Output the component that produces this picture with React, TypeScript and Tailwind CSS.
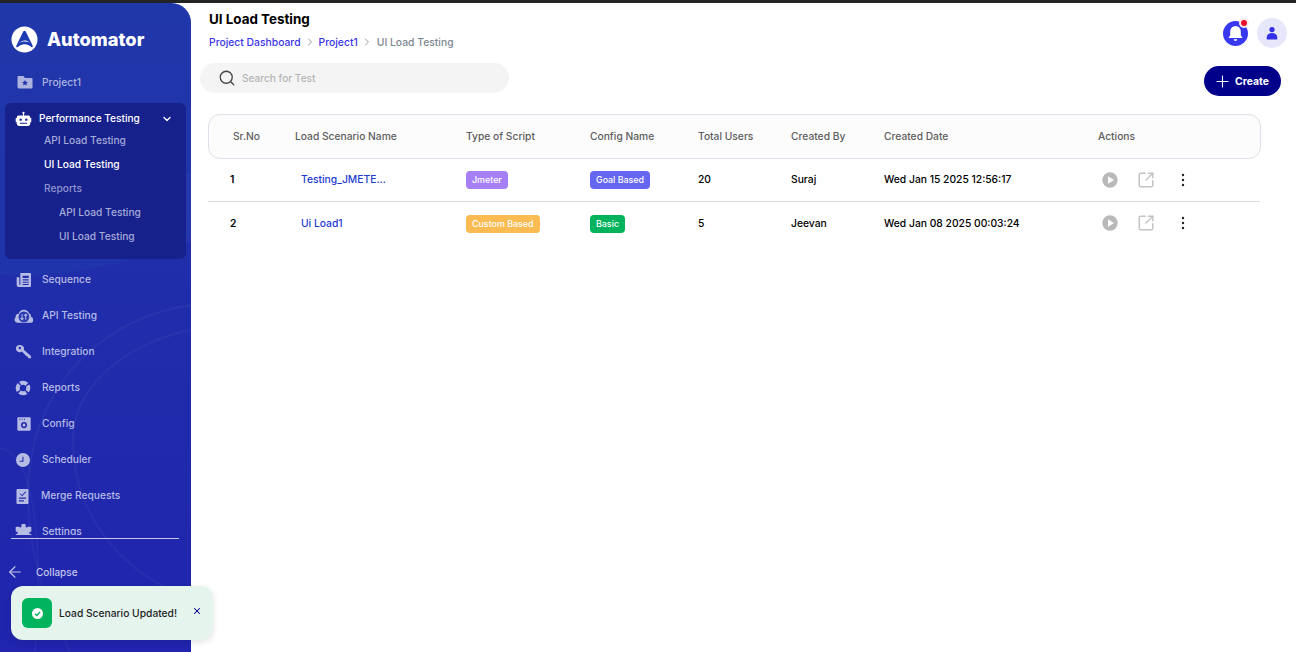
import React from "react";
import { ChevronDown, ChevronRight, Search, Plus, X, ArrowLeft, SquareArrowOutUpRight } from "lucide-react";

const Ic = ({ children, cls = "w-[16px] h-[16px]" }: { children: React.ReactNode; cls?: string }) => (
  <svg viewBox="0 0 24 24" className={cls} fill="currentColor">{children}</svg>
);

const FolderStar = () => (
  <Ic cls="w-[18px] h-[18px]"><path fillRule="evenodd" d="M3 4h7l2 2.500h8.500A1.500 1.500 0 0 1 22 8v11a1.500 1.500 0 0 1-1.500 1.500h-17A1.500 1.500 0 0 1 2 19V5a1 1 0 0 1 1-1Zm9 5.200 1.200 2.600 2.800.3-2.100 1.900.6 2.800-2.500-1.400-2.500 1.400.6-2.800L8 12.100l2.800-.3Z" /></Ic>
);
const Robot = () => (
  <Ic cls="w-[17px] h-[17px]"><path fillRule="evenodd" d="M12 1a1.600 1.600 0 0 1 .8 3v2.500H19a2.500 2.500 0 0 1 2.500 2.500v1H23v6h-1.500v2a3 3 0 0 1-3 3h-13a3 3 0 0 1-3-3v-2H1v-6h1.500V9A2.500 2.500 0 0 1 5 6.500h6.200V4A1.600 1.600 0 0 1 12 1ZM8 10.500a1.700 1.700 0 1 0 0 3.400 1.700 1.700 0 0 0 0-3.400Zm8 0a1.700 1.700 0 1 0 0 3.400 1.700 1.700 0 0 0 0-3.400ZM7 16.500V18h10v-1.500Z" /></Ic>
);
const Sequence = () => (
  <Ic><path fillRule="evenodd" d="M7 1.500h14A1.500 1.500 0 0 1 22.500 3v18a1.500 1.500 0 0 1-1.500 1.500H4A3 3 0 0 1 1 19.500V8h4v11h1.500V2A.5.5 0 0 1 7 1.500ZM10 5.500V9h9V5.500ZM10 11v1.800h9V11Zm0 3.500v1.800h9v-1.800Zm0 3.500v1.500h9V18Z" /></Ic>
);
const Cloud = () => (
  <svg viewBox="0 0 24 24" className="w-[19px] h-[19px]">
    <path fill="currentColor" d="M12.500 3.500a7 7 0 0 1 6.500 4.500 4 4 0 0 1 2.500 4.500 4 4 0 0 1 .5 7.500H4a4 4 0 0 1-1.800-7A3.500 3.500 0 0 1 6 8.500a7 7 0 0 1 6.500-5Z" />
    <circle cx="12.500" cy="12.500" r="6.800" fill="#2a3bb0" />
    <path d="M10.200 9v7M8.300 14l1.900 2 1.900-2M14.800 16V9M12.900 11l1.900-2 1.900 2" fill="none" stroke="currentColor" strokeWidth="1.300" />
  </svg>
);
const Wrench = () => (
  <Ic><path fillRule="evenodd" d="M6.500 1.500a5.500 5.500 0 0 1 5.200 7.300l10.800 9.200v3.500h-3.500l-1.500-1.500v-1.500h-1.800l-6.900-7.400A5.500 5.500 0 1 1 6.500 1.500ZM5.800 4.300a1.800 1.800 0 1 0 0 3.600 1.800 1.800 0 0 0 0-3.600Z" /></Ic>
);
const Donut = () => (
  <svg viewBox="0 0 24 24" className="w-[16px] h-[16px]" fill="none" stroke="currentColor" strokeWidth="6">
    <circle cx="12" cy="12" r="8" strokeDasharray="10.570 2" strokeDashoffset="5.290" />
  </svg>
);
const ConfigIc = () => (
  <Ic><path fillRule="evenodd" d="M3.500 2h17A1.500 1.500 0 0 1 22 3.500v17a1.500 1.500 0 0 1-1.500 1.500h-17A1.500 1.500 0 0 1 2 20.500v-17A1.500 1.500 0 0 1 3.500 2ZM5 4.200v1.600h1.600V4.200Zm3.500 0v1.600h1.600V4.200Zm3.500 0v1.600h1.600V4.200ZM12 8l1 1.600 1.800-.3.700 1.700 1.500 1-.8 1.600.8 1.600-1.500 1-.7 1.700-1.800-.3-1 1.400-1-1.400-1.800.3-.7-1.700-1.500-1 .8-1.600-.8-1.600 1.500-1 .7-1.700 1.800.3Zm0 3.300a2.300 2.300 0 1 0 0 4.600 2.300 2.300 0 0 0 0-4.600Z" /></Ic>
);
const Clock = () => (
  <Ic><path fillRule="evenodd" d="M12 1.500a10.500 10.500 0 1 1 0 21 10.500 10.500 0 0 1 0-21ZM12.700 7h-1.600v6.200H7v1.600h5.700Z" /></Ic>
);
const Clip = () => (
  <Ic cls="w-[17px] h-[17px]"><path fillRule="evenodd" d="M5 1.500h14A1.500 1.500 0 0 1 20.500 3v18a1.500 1.500 0 0 1-1.500 1.500H5A1.500 1.500 0 0 1 3.500 21V3A1.500 1.500 0 0 1 5 1.500Zm11 3.300-4.500 5-2.300-2.100L8 8l3.500 3.500 5.700-5.700ZM7 13.500v1.800h10v-1.800Zm0 3.700V19h7v-1.800Z" /></Ic>
);
const Gear = () => (
  <svg viewBox="0 0 24 24" className="w-[17px] h-[17px]" fill="currentColor">
    <circle cx="12" cy="12" r="8.500" />
    <rect x="9" y="0" width="6" height="6" rx="1" />
    <rect x="1" y="4" width="6" height="7" rx="1" />
    <rect x="17" y="4" width="6" height="7" rx="1" />
    <rect x="1" y="14" width="6" height="6" rx="1" />
    <rect x="17" y="14" width="6" height="6" rx="1" />
  </svg>
);
const Bell = () => (
  <svg viewBox="0 0 24 24" className="w-[17px] h-[19px]" fill="white"><path d="M12 1.500a7.500 7.500 0 0 1 7.500 7.500v5.500l2.500 4H2l2.500-4V9A7.500 7.500 0 0 1 12 1.500ZM9.500 20h5a2.500 2.500 0 0 1-5 0Z" /></svg>
);
const Logo = () => (
  <svg viewBox="0 0 28 28" className="w-[27px] h-[27px] shrink-0">
    <circle cx="14" cy="14" r="13.500" fill="white" />
    <path d="M12.700 5.800a1.500 1.500 0 0 1 2.600 0L22.500 20.500a1 1 0 0 1-1.400 1.300c-2.400-1.700-4.300-2.600-6.600-2.800-2.500-.2-5 .9-7.500 2.800a1 1 0 0 1-1.500-1.300Z" fill="#1d39b4" />
    <path d="M8 17.600c2.200-2 5-2.900 7.200-2.500 1.600.3 2.800 1 3.800 2.100-2.800-1.300-6.800-1.600-11 .4Z" fill="white" />
  </svg>
);

const navs: { label: string; icon: React.ReactNode; iconBox: string; gap: string }[] = [
  { label: "Sequence", icon: <Sequence />, iconBox: "pl-[16px]", gap: "ml-[10px]" },
  { label: "API Testing", icon: <Cloud />, iconBox: "pl-[14px]", gap: "ml-[9px]" },
  { label: "Integration", icon: <Wrench />, iconBox: "pl-[16px]", gap: "ml-[10px]" },
  { label: "Reports", icon: <Donut />, iconBox: "pl-[15px]", gap: "ml-[11px]" },
  { label: "Config", icon: <ConfigIc />, iconBox: "pl-[16px]", gap: "ml-[10px]" },
  { label: "Scheduler", icon: <Clock />, iconBox: "pl-[15px]", gap: "ml-[11px]" },
  { label: "Merge Requests", icon: <Clip />, iconBox: "pl-[14px]", gap: "ml-[10px]" },
  { label: "Settings", icon: <Gear />, iconBox: "pl-[15px]", gap: "ml-[10px]" },
];

const subs: { label: string; cls: string }[] = [
  { label: "API Load Testing", cls: "pl-[39px] text-[#a6abd9]" },
  { label: "UI Load Testing", cls: "pl-[39px] text-white" },
  { label: "Reports", cls: "pl-[39px] text-[#8f95cf]" },
  { label: "API Load Testing", cls: "pl-[54px] text-[#a6abd9]" },
  { label: "UI Load Testing", cls: "pl-[54px] text-[#a6abd9]" },
];

const Sidebar = () => (
  <aside className="relative w-[191px] h-full shrink-0 overflow-hidden rounded-tr-[20px] bg-gradient-to-b from-[#2033a8] to-[#2024ae] flex flex-col">
    <svg viewBox="0 0 191 649" className="absolute inset-0 w-full h-full pointer-events-none" fill="none" stroke="#ffffff" strokeOpacity="0.035">
      <path d="M191 170C150 178 130 200 130 240L191 240Z" fill="#ffffff" fillOpacity="0.03" stroke="none" />
      <path d="M0 272C60 277 130 262 191 232V0H0Z" fill="#2140ad" fillOpacity="0.35" stroke="none" />
      <path d="M191 327C120 342 73 387 73 437C73 517 130 577 191 594" strokeWidth="2.500" />
      <path d="M191 302C90 317 28 397 28 490C28 557 50 607 70 649" strokeWidth="2.500" />
      <path d="M0 445C30 450 45 520 35 649" strokeWidth="2" />
    </svg>
    <div className="relative flex flex-col h-full font-['Inter',sans-serif]">
      <div className="flex items-center h-[27px] mt-[23px] pl-[11px] gap-[9px]">
        <Logo />
        <span className="text-white text-[18.300px] font-extrabold leading-none">Automator</span>
      </div>
      <div className="flex items-center h-[18px] mt-[20px] pl-[16px] text-[#adb3e0]">
        <FolderStar />
        <span className="ml-[8px] text-[10.300px] font-medium relative top-[1px]">Project1</span>
      </div>
      <div className="mt-[12px] mx-[5px] h-[156px] rounded-[6px] bg-[#17218c] pt-[8px] shrink-0">
        <div className="flex items-center h-[16px] pl-[10px] pr-[13px] text-white">
          <Robot />
          <span className="ml-[7px] text-[10.100px] font-medium">Performance Testing</span>
          <ChevronDown className="w-[12px] h-[12px] ml-auto" strokeWidth={2.500} />
        </div>
        <div className="flex flex-col mt-[2px]">
          {subs.map((s, i) => (
            <div key={i} className={`h-[24px] flex items-center text-[10.200px] font-medium ${s.cls}`}>{s.label}</div>
          ))}
        </div>
      </div>
      <div className="h-[273px] mt-[3px] overflow-hidden shrink-0">
        <div className="flex flex-col">
          {navs.map((n) => (
            <div key={n.label} className={`h-[36px] shrink-0 flex items-center text-[#b6bbe6] ${n.iconBox}`}>
              {n.icon}
              <span className={`${n.gap} text-[10.200px] font-medium`}>{n.label}</span>
            </div>
          ))}
        </div>
      </div>
    </div>
    <div className="absolute left-[11px] top-[535px] w-[168px] h-px bg-[#c5c9ee]" />
    <div className="absolute left-[6px] top-[560px] flex items-center text-[#c3c7ec] font-['Inter',sans-serif]">
      <ArrowLeft className="w-[18px] h-[18px]" strokeWidth={1.500} />
      <span className="ml-[12px] text-[10px] font-medium">Collapse</span>
    </div>
  </aside>
);

const Badge = ({ text, cls }: { text: string; cls: string }) => (
  <span className={`inline-flex items-center h-[18px] px-[6px] rounded-[4px] text-[8.900px] font-medium text-white ${cls}`}>{text}</span>
);

const gridCols = "grid-cols-[87px_171px_124px_108px_93px_93px_214px_1fr]";
const headCols = "grid-cols-[86px_171px_124px_108px_93px_93px_214px_1fr]";

const rows = [
  { n: "1", name: "Testing_JMETE...", type: "Jmeter", tc: "bg-[#a67ff5]", cfg: "Goal Based", cc: "bg-[#6667f0]", users: "20", by: "Suraj", date: "Wed Jan 15 2025 12:56:17" },
  { n: "2", name: "Ui Load1", type: "Custom Based", tc: "bg-[#fabb52]", cfg: "Basic", cc: "bg-[#00b35c]", users: "5", by: "Jeevan", date: "Wed Jan 08 2025 00:03:24" },
];

const Main = () => (
  <main className="relative flex-1 min-w-0 h-full flex flex-col font-['Inter',sans-serif]">
    <div className="flex items-start justify-between pl-[18px] pr-[9px]">
      <div className="flex flex-col">
        <h1 className="mt-[8px] text-[13.400px] leading-[16px] font-bold text-black">UI Load Testing</h1>
        <div className="flex items-center mt-[8px] text-[10.350px] leading-[14px] font-medium">
          <span className="text-[#3a34e8]">Project Dashboard</span>
          <ChevronRight className="w-[12px] h-[12px] mx-[3px] text-[#9a9a9a]" />
          <span className="text-[#3a34e8]">Project1</span>
          <ChevronRight className="w-[12px] h-[12px] mx-[3.500px] text-[#9a9a9a]" />
          <span className="text-[#7d8791]">UI Load Testing</span>
        </div>
      </div>
      <div className="flex items-center gap-[9px] mt-[15px]">
        <div className="relative w-[25px] h-[25px] rounded-full bg-[#3838f0] flex items-center justify-center">
          <Bell />
          <span className="absolute right-[1px] top-[-1px] w-[6px] h-[6px] rounded-full bg-[#e8112d] ring-2 ring-[#fde8ea]" />
        </div>
        <div className="w-[30px] h-[30px] rounded-full bg-[#e6e7fb] flex items-center justify-center">
          <svg viewBox="0 0 24 24" className="w-[14px] h-[14px]" fill="#3232e6"><circle cx="12" cy="6" r="4.500" /><path d="M3 23v-4c0-4 3.500-7 9-7s9 3 9 7v4Z" /></svg>
        </div>
      </div>
    </div>

    <div className="flex items-start justify-between mt-[14px] pl-[9px] pr-[15px]">
      <div className="flex items-center w-[309px] h-[30px] rounded-full bg-[#f4f4f4] pl-[18px]">
        <Search className="w-[18px] h-[18px] text-[#444444]" strokeWidth={1.700} />
        <span className="ml-[6px] text-[10.100px] text-[#b4b4b4] font-medium relative top-[1px]">Search for Test</span>
      </div>
      <div className="flex items-center w-[77px] h-[30px] mt-[3px] rounded-full bg-[#00008b] text-white pl-[9px]">
        <Plus className="w-[19px] h-[19px]" strokeWidth={1.400} />
        <span className="ml-[3px] text-[10.400px] font-bold relative top-[1px]">Create</span>
      </div>
    </div>

    <div className="mt-[18px] ml-[17px] w-[1053px]">
      <div className={`grid ${headCols} items-center h-[45px] rounded-[12px] border border-[#e0e0ea] bg-[#fcfcfc] text-[10.250px] font-medium text-[#5c5c5c]`}>
        <span className="pl-[24px]">Sr.No</span>
        <span>Load Scenario Name</span>
        <span>Type of Script</span>
        <span>Config Name</span>
        <span>Total Users</span>
        <span>Created By</span>
        <span>Created Date</span>
        <span>Actions</span>
      </div>
      {rows.map((r, i) => (
        <div key={r.n} className={`grid ${gridCols} items-center h-[43px] mr-[1px] text-[10.300px] font-medium text-black ${i === 0 ? "border-b border-[#dddde3]" : ""}`}>
          <span className="pl-[22px] font-semibold">{r.n}</span>
          <span className="pl-[6px] text-[#1c3bd0]">{r.name}</span>
          <span><Badge text={r.type} cls={r.tc} /></span>
          <span><Badge text={r.cfg} cls={r.cc} /></span>
          <span>{r.users}</span>
          <span>{r.by}</span>
          <span>{r.date}</span>
          <span className="flex items-center -mt-[1px]">
            <svg viewBox="0 0 24 24" className="w-[16px] h-[16px] ml-[4px]"><circle cx="12" cy="12" r="11.500" fill="#b9b9b9" /><path d="M9 6.500l9 5.500-9 5.500Z" fill="white" /></svg>
            <SquareArrowOutUpRight className="w-[18px] h-[18px] ml-[19px] text-[#c4c4c4]" strokeWidth={2} />
            <svg viewBox="0 0 4 14" className="w-[4px] h-[14px] ml-[26px]" fill="#222222"><circle cx="2" cy="2" r="1.200" /><circle cx="2" cy="7" r="1.200" /><circle cx="2" cy="12" r="1.200" /></svg>
          </span>
        </div>
      ))}
    </div>
  </main>
);

export default function App() {
  return (
    <div className="relative w-[1296px] h-[652px] overflow-hidden bg-white flex flex-col">
      <div className="h-[3px] bg-[#232323] shrink-0" />
      <div className="flex-1 min-h-0 flex">
        <Sidebar />
        <Main />
      </div>
      <div className="absolute left-[11px] top-[586px] w-[202px] h-[54px] rounded-[12px] bg-[#e5f5ee] shadow-[0_2px_6px_rgba(0,0,0,0.12)] flex items-center pl-[11px] font-['Inter',sans-serif]">
        <div className="w-[30px] h-[30px] rounded-[6px] bg-[#00b35c] flex items-center justify-center">
          <svg viewBox="0 0 24 24" className="w-[11px] h-[11px]"><circle cx="12" cy="12" r="12" fill="white" /><path d="M6.500 12.500l4 4 7-8" fill="none" stroke="#00b35c" strokeWidth="3" /></svg>
        </div>
        <span className="ml-[7px] text-[10.250px] font-medium text-[#1f1f1f] relative top-[1px]">Load Scenario Updated!</span>
        <X className="absolute right-[11px] top-[20px] w-[10px] h-[10px] text-[#00008b]" strokeWidth={2.500} />
      </div>
    </div>
  );
}
